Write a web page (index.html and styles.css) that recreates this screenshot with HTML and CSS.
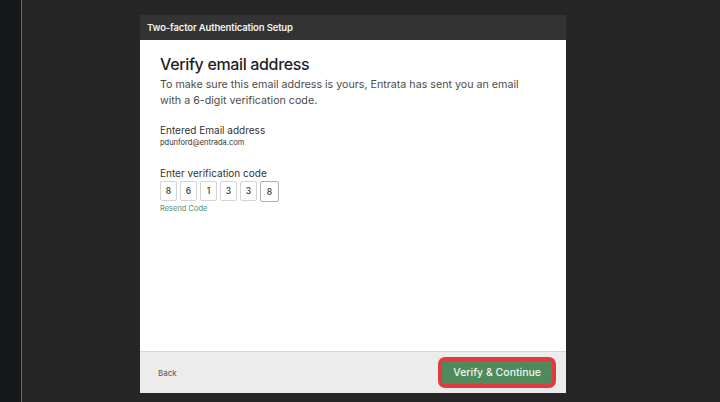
FILE: index.html
```html
<!DOCTYPE html>
<html>
<head>
<meta charset="utf-8">
<link rel="stylesheet" href="styles.css">
</head>
<body>
<div class="screen">
  <div class="side"></div>
  <div class="stage">
    <div class="modal">
      <div class="modal-head">Two-factor Authentication Setup</div>
      <div class="modal-body">
        <h1 class="title">Verify email address</h1>
        <p class="lead">To make sure this email address is yours, Entrata has sent you an email with a 6-digit verification code.</p>
        <div class="field">
          <div class="label">Entered Email address</div>
          <div class="value">pdunford@entrada.com</div>
        </div>
        <div class="field code-field">
          <div class="label">Enter verification code</div>
          <div class="code">
            <span class="digit">8</span>
            <span class="digit">6</span>
            <span class="digit">1</span>
            <span class="digit">3</span>
            <span class="digit">3</span>
            <span class="digit active">8</span>
          </div>
          <a class="resend">Resend Code</a>
        </div>
      </div>
      <div class="modal-foot">
        <span class="back">Back</span>
        <span class="btn-ring"><span class="btn">Verify &amp; Continue</span></span>
      </div>
    </div>
  </div>
</div>
</body>
</html>
```
FILE: styles.css
```css
* { box-sizing: border-box; }
html, body { margin: 0; padding: 0; }
body {
  width: 720px;
  height: 402px;
  overflow: hidden;
  background: #262626;
  font-family: Inter, "Noto Sans", sans-serif;
}
.screen {
  display: flex;
  height: 402px;
}
.side {
  width: 22px;
  background: #16171b;
  border-right: 1px solid #6a6a6a;
}
.stage {
  flex: 1;
  padding: 15px 0 0 118px;
}
.modal {
  width: 426px;
  height: 378px;
  display: flex;
  flex-direction: column;
  background: #ffffff;
}
.modal-head {
  height: 25px;
  background: #333333;
  color: #f2f2f2;
  font-size: 9.5px;
  font-weight: 600;
  padding: 7px 0 0 7px;
  letter-spacing: -0.15px;
}
.modal-body {
  flex: 1;
  padding: 13px 20px 0 20px;
}
.title {
  margin: 0;
  font-size: 16px;
  font-weight: 500;
  color: #1f1f1f;
  line-height: 22px;
  letter-spacing: -0.35px;
}
.lead {
  margin: 2px 0 0 0;
  font-size: 10.7px;
  line-height: 16px;
  color: #4c4c4c;
  width: 370px;
}
.field { margin-top: 15px; }
.label {
  font-size: 10px;
  color: #333333;
  line-height: 13px;
}
.value {
  font-size: 7.5px;
  color: #333333;
  line-height: 12px;
  margin-top: 0;
}
.code-field { margin-top: 18px; }
.code {
  display: flex;
  gap: 3px;
  margin-top: 1px;
}
.digit {
  width: 17px;
  height: 20px;
  border: 1px solid #d4d4d4;
  border-radius: 2px;
  display: flex;
  align-items: center;
  justify-content: center;
  font-size: 8.5px;
  font-weight: 500;
  color: #333333;
}
.digit.active {
  width: 19px;
  height: 21px;
  border-color: #b0b0b0;
}
.resend {
  display: block;
  font-size: 7.5px;
  color: #5a8a68;
  margin-top: 2px;
}
.modal-foot {
  height: 42px;
  background: #ececec;
  border-top: 1px solid #d6d6d6;
  display: flex;
  align-items: center;
  justify-content: space-between;
  padding: 0 10px 0 18px;
}
.back {
  font-size: 8px;
  color: #555555;
}
.btn-ring {
  display: flex;
  padding: 4px;
  background: #e23a3f;
  border-radius: 7px;
}
.btn {
  display: block;
  background: #4f8a5c;
  color: #f1f5f1;
  font-size: 10.5px;
  font-weight: 500;
  padding: 5px 11px 5px 11px;
  border-radius: 2px;
  line-height: 13px;
}
```
